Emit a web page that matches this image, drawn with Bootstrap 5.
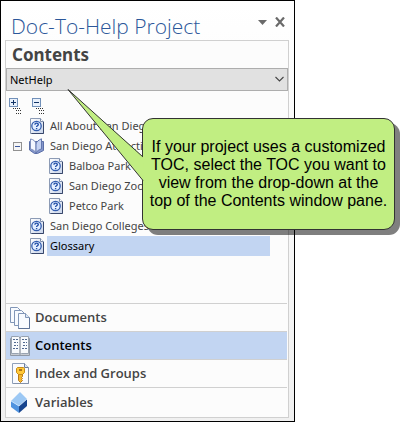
<!DOCTYPE html>
<html lang="en">
<head>
<meta charset="utf-8">
<meta name="viewport" content="width=device-width, initial-scale=1">
<title>Doc-To-Help Project</title>
<link href="https://cdn.jsdelivr.net/npm/bootstrap@5.3.0/dist/css/bootstrap.min.css" rel="stylesheet">
<style>
body { background: #fff; font-family: "Noto Sans", sans-serif; color: #444; }
.shell { max-width: 295px; min-height: 100vh; border: 1px solid #000; background: linear-gradient(#fff, #f0f0f0); padding: 0 5px 3px 4px; }
.title-row { height: 39px; padding: 0 4px 0 6px; }
.title-row h1 { font-family: "Open Sans", sans-serif; font-weight: 300; font-size: 21px; line-height: 28px; margin: 11px 0 0; color: #2b579a; }
.tool { padding: 0; border: 0; background: none; line-height: 0; margin-top: 16px; }
.pane { border: 1px solid #d0d0d0; background: #fcfcfc; }
.pane h2 { font-weight: 700; font-size: 17px; line-height: 27px; margin: 0; padding-left: 6px; }
.toc-select { appearance: none; height: 23px; padding: 0 20px 0 3px; border: 1px solid #adadad; border-radius: 0; background-color: #e1e1e1; background-image: none; color: #000; font-size: 11px; line-height: 20px; }
.select-arrow { right: 4px; top: 8px; pointer-events: none; }
.tree-tools { padding: 3px 0 0 3px; gap: 10px; height: 25px; }
.tree-tools button { border: 0; padding: 0; background: none; line-height: 0; }
.tree { font-size: 11px; line-height: 20px; margin: 0 18px 0 7px; white-space: nowrap; }
.tree-item { height: 20px; }
.tree-item svg { flex: none; }
.slot { width: 16px; line-height: 0; flex: none; }
.indent { width: 19px; }
.tree-item a { padding: 0 3px; margin-left: 2px; color: #444; text-decoration: none; }
.tree-item a.picked { background: #c2d5f2; color: #000; }
.sections { font-family: "Open Sans", sans-serif; font-size: 13px; font-weight: 600; }
.sections a { height: 28px; border-top: 1px solid #d0d0d0; color: #444; text-decoration: none; padding-left: 3px; gap: 4px; margin-right: 1px; }
.sections a.current { background: #c2d5f2; color: #000; }
.sections a:last-child { height: 30px; }
.callout { left: 142px; top: 118px; width: 253px; height: 112px; border: 1px solid #333; border-radius: 11px; background: #c1ee82; box-shadow: 5px 5px 0 rgba(0,0,0,.5); color: #000; font-family: "Liberation Sans", Arial, sans-serif; font-size: 16px; line-height: 18px; text-align: center; white-space: nowrap; }
.tail { left: 66px; top: 87px; pointer-events: none; }
</style>
<script src="https://cdn.jsdelivr.net/npm/bootstrap@5.3.0/dist/js/bootstrap.bundle.min.js"></script>
</head>
<body>
<svg width="0" height="0" class="position-absolute" aria-hidden="true">
  <defs>
    <linearGradient id="pg" x2="1" y2="1"><stop stop-color="#fff"/><stop offset="1" stop-color="#c8d4ea"/></linearGradient>
    <symbol id="topic" viewBox="0 0 16 16">
      <path d="M1.500 .5h10l3 3v12h-13z" fill="url(#pg)" stroke="#8c9bb5"/>
      <path d="M14.500 4v11.500h-12" fill="none" stroke="#38476b"/>
      <path d="M11.500 .5v3h3" fill="#fff" stroke="#7c8cab"/>
      <circle cx="7.500" cy="8" r="4.700" fill="#e4efff" stroke="#315cae" stroke-width="1.300"/>
      <path d="M5.900 6.800c0-2.200 3.400-2.100 3.400-.2 0 1.200-1.700 1.200-1.700 2.400M7.600 10v1.300" fill="none" stroke="#2450a8" stroke-width="1.400"/>
    </symbol>
    <symbol id="book" viewBox="0 0 16 16">
      <path d="M.5 3.500v8.500l5 3.500h3l6-3V3.500z" fill="#8496ca" stroke="#5b6fa8"/>
      <path d="M1.500 1c3 .5 5 2 5.500 5v9c-1-2-3-3.500-5.500-4z" fill="#f4f7ff" stroke="#7f90bd"/>
      <path d="M12.500 .8c-3 1.200-5 3-5.500 5.200v9c1-2 3-3.500 5.500-4z" fill="#c5d2f2" stroke="#6377ae"/>
    </symbol>
  </defs>
</svg>
<main class="shell d-flex flex-column">
  <header class="title-row d-flex align-items-start">
    <h1 class="me-auto">Doc-To-Help Project</h1>
    <button class="tool me-2" type="button" aria-label="Pane options"><svg width="9" height="10"><path d="M0 3h9L4.500 8z" fill="#6a6a6a"/></svg></button>
    <button class="tool" type="button" aria-label="Close"><svg width="10" height="10" viewBox="0 0 10 10"><path d="M1 .5l8 9M9 .5l-8 9" stroke="#6a6a6a" stroke-width="2.200"/></svg></button>
  </header>
  <section class="pane flex-grow-1 d-flex flex-column">
    <h2>Contents</h2>
    <div class="position-relative">
      <select class="form-select toc-select" aria-label="Table of contents"><option>NetHelp</option></select>
      <svg class="select-arrow position-absolute" width="9" height="7"><path d="M.5 1l4 4 4-4" fill="none" stroke="#444" stroke-width="1.100"/></svg>
    </div>
    <div class="tree-tools d-flex">
      <button type="button" aria-label="Expand all"><svg width="13" height="18" shape-rendering="crispEdges"><path d="M.5 2.500h8v8h-8z" fill="#e9f1fc" stroke="#7190b9"/><path d="M2 6.500h5M4.500 4v5" stroke="#123466"/><path d="M4 12.500h8M7 14.500h5M7 17.500h5" stroke="#333" stroke-dasharray="1 1"/></svg></button>
      <button type="button" aria-label="Collapse all"><svg width="13" height="18" shape-rendering="crispEdges"><path d="M.5 2.500h8v8h-8z" fill="#e9f1fc" stroke="#7190b9"/><path d="M2 6.500h5" stroke="#123466"/><path d="M4 12.500h8M7 14.500h5M7 17.500h5" stroke="#333" stroke-dasharray="1 1"/></svg></button>
    </div>
    <nav class="tree" aria-label="Topics">
      <div class="tree-item d-flex align-items-center"><span class="slot"></span><svg width="16" height="16"><use href="#topic"/></svg><a href="#">All About San Diego</a></div>
      <div class="tree-item d-flex align-items-center"><span class="slot"><svg width="9" height="9" shape-rendering="crispEdges"><path d="M.5 .5h8v8h-8z" fill="#f5f5f5" stroke="#919191"/><path d="M2 4.500h5" stroke="#3b589d"/></svg></span><svg width="16" height="16"><use href="#book"/></svg><a href="#">San Diego Attractions</a></div>
      <div class="tree-item d-flex align-items-center"><span class="slot"></span><span class="indent"></span><svg width="16" height="16"><use href="#topic"/></svg><a href="#">Balboa Park</a></div>
      <div class="tree-item d-flex align-items-center"><span class="slot"></span><span class="indent"></span><svg width="16" height="16"><use href="#topic"/></svg><a href="#">San Diego Zoo</a></div>
      <div class="tree-item d-flex align-items-center"><span class="slot"></span><span class="indent"></span><svg width="16" height="16"><use href="#topic"/></svg><a href="#">Petco Park</a></div>
      <div class="tree-item d-flex align-items-center"><span class="slot"></span><svg width="16" height="16"><use href="#topic"/></svg><a href="#">San Diego Colleges and Universities</a></div>
      <div class="tree-item d-flex align-items-center"><span class="slot"></span><svg width="16" height="16"><use href="#topic"/></svg><a class="picked flex-grow-1" href="#">Glossary</a></div>
    </nav>
    <nav class="sections mt-auto d-flex flex-column" aria-label="Sections">
      <a class="d-flex align-items-center" href="#"><svg width="22" height="24" viewBox="0 0 22 24"><g fill="#f8fbff" stroke="#8196b7"><path d="M1.500 1.500h7l3 3v12h-10z"/><path d="M5.500 4.500h7l3 3v12h-10z"/><path d="M9.500 7.500h7l4 4v11h-11z"/><path d="M16.500 7.500v4h4" fill="#dce7f5"/></g><path d="M20.500 12v10.500h-11" fill="none" stroke="#5d7398"/></svg>Documents</a>
      <a class="d-flex align-items-center current" href="#" aria-current="page"><svg width="22" height="24" viewBox="0 0 22 24"><path d="M1.500 4.500h19v17h-19z" fill="#c8ccd2" stroke="#8f98a5"/><path d="M2.500 2.500h7l1.500 1 1.500-1h7v17h-7l-1.500 1-1.500-1h-7z" fill="#f8fafc" stroke="#98a3b1"/><path d="M11 3v17" stroke="#6e7783"/><path d="M4 5.500h5M5 8.500h4M5 11.500h4M4 14.500h5M13 5.500h5M14 8.500h4M14 11.500h4M13 14.500h5" stroke="#50678e" stroke-dasharray="2 1"/></svg>Contents</a>
      <a class="d-flex align-items-center" href="#"><svg width="22" height="24" viewBox="0 0 22 24"><path d="M3.500 1.500h12l4 4v16h-16z" fill="#f9fbff" stroke="#8fa0ba"/><path d="M15.500 1.500v4h4" fill="#dce6f4" stroke="#6d7f9d"/><path d="M19.500 6v15.500h-15" fill="none" stroke="#8392aa"/><path d="M9.500 12v6.500l2 2 2-2-1-1 1-1-1-1 1-1V12z" fill="#f5b62c" stroke="#b87918"/><path d="M8.500 5.500h6l1 1v4l-2 2h-4l-2-2v-4z" fill="#ffc83a" stroke="#c58b18"/><path d="M10 8h3" stroke="#8c5912" stroke-width="1.500"/></svg>Index and Groups</a>
      <a class="d-flex align-items-center" href="#"><svg width="22" height="24" viewBox="0 0 22 24"><path d="M11 1l7 7-8 7-8-5z" fill="#9cc8f4"/><path d="M2 10l8 5v7l-8-6z" fill="#4f93df"/><path d="M18 8v7l-8 7v-7z" fill="#17458e"/><path d="M2 10l8 5 8-7" fill="none" stroke="#d4eaff" stroke-width=".8"/></svg>Variables</a>
    </nav>
  </section>
</main>
<aside class="callout position-absolute d-flex align-items-center justify-content-center" role="note"><div>If your project uses a customized<br>TOC, select the TOC you want to<br>view from the drop-down at the<br>top of the Contents window pane.</div></aside>
<svg class="tail position-absolute" width="80" height="98" aria-hidden="true"><path d="M78 70.500L2 2.500l75 91z" fill="#c1ee82"/><path d="M77 70L2 2.500l75 91" fill="none" stroke="#333"/></svg>
</body>
</html>
